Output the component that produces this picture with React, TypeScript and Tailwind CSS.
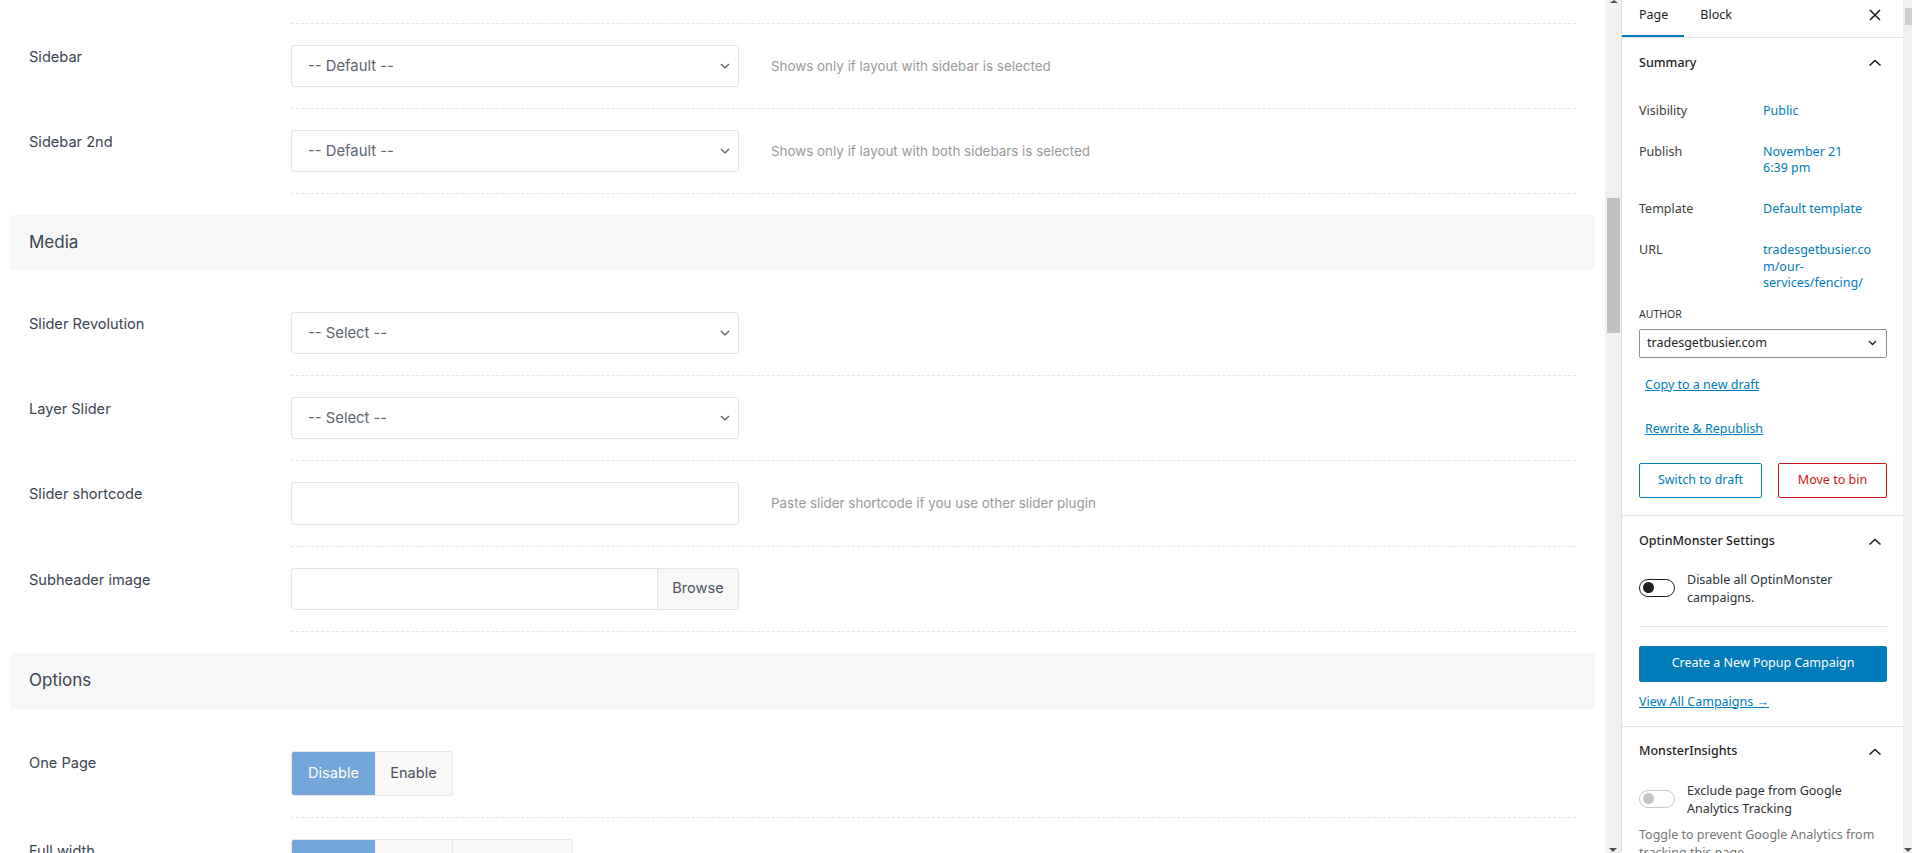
import React from "react";

function Chevron() {
  return (
    <svg width="10" height="6" viewBox="0 0 10 6" fill="none">
      <path d="M1 1 L5 5 L9 1" stroke="#555" strokeWidth="1.2" />
    </svg>
  );
}

function SelectBox({ text }: { text: string }) {
  return (
    <div className="w-[448px] h-[42px] border border-[#e1e5ea] rounded-[3px] bg-white flex items-center justify-between pl-[16px] pr-[8px] text-[14.8px] text-[#5d6570]">
      <span>{text}</span>
      <Chevron />
    </div>
  );
}

function Row({ label, children }: { label: string; children: React.ReactNode }) {
  return (
    <div className="flex px-[19px]">
      <div className="w-[262px] shrink-0 pt-[23px] text-[14.6px] leading-[20px] text-[#3b4552]">{label}</div>
      <div className="flex-1 pt-[21px] pb-[21px] border-b border-dashed border-[#e4e4e4] flex items-center">
        {children}
      </div>
    </div>
  );
}

function Help({ children }: { children: React.ReactNode }) {
  return <span className="ml-[32px] text-[13.4px] text-[#9a9a9a]">{children}</span>;
}

function SectionHead({ title, tall }: { title: string; tall?: boolean }) {
  return (
    <div
      className={
        "bg-[#f7f7f7] flex items-center px-[19px] text-[17px] text-[#3a4350] " + (tall ? "h-[56px]" : "h-[55px]")
      }
    >
      {title}
    </div>
  );
}

function ChevronUp() {
  return (
    <svg width="24" height="24" viewBox="0 0 24 24" fill="none">
      <path d="M6.5 14.5 L12 9.5 L17.5 14.5" stroke="#1e1e1e" strokeWidth="1.6" />
    </svg>
  );
}

function Toggle({ disabled }: { disabled?: boolean }) {
  return (
    <div
      className={
        "w-[36px] h-[18px] rounded-full border bg-white relative shrink-0 " +
        (disabled ? "border-[#c8c8c8]" : "border-[#1e1e1e]")
      }
    >
      <div
        className={
          "absolute top-[2.5px] left-[3px] w-[11px] h-[11px] rounded-full " +
          (disabled ? "bg-[#c4c4c4]" : "bg-[#1e1e1e]")
        }
      />
    </div>
  );
}

export default function App() {
  return (
    <div className="w-[1912px] h-[853px] overflow-hidden flex bg-white">
      {/* main content */}
      <div className="w-[1605px] shrink-0 px-[10px] font-[Inter,sans-serif]">
        <div className="flex px-[19px]">
          <div className="w-[262px] shrink-0" />
          <div className="flex-1 h-[24px] border-b border-dashed border-[#e4e4e4]" />
        </div>
        <Row label="Sidebar">
          <SelectBox text="-- Default --" />
          <Help>Shows only if layout with sidebar is selected</Help>
        </Row>
        <Row label="Sidebar 2nd">
          <SelectBox text="-- Default --" />
          <Help>Shows only if layout with both sidebars is selected</Help>
        </Row>
        <div className="mt-[21px]">
          <SectionHead title="Media" />
        </div>
        <div className="pt-[21px]">
          <Row label="Slider Revolution">
            <SelectBox text="-- Select --" />
          </Row>
          <Row label="Layer Slider">
            <SelectBox text="-- Select --" />
          </Row>
          <Row label="Slider shortcode">
            <div className="w-[448px] h-[43px] border border-[#e1e5ea] rounded-[3px] bg-white" />
            <Help>Paste slider shortcode if you use other slider plugin</Help>
          </Row>
          <Row label="Subheader image">
            <div className="w-[448px] h-[42px] border border-[#e1e5ea] rounded-[3px] bg-white flex overflow-hidden">
              <div className="flex-1" />
              <div className="w-[81px] bg-[#f7f7f7] border-l border-[#e1e5ea] flex items-center justify-center text-[14.6px] text-[#4b5360]">
                Browse
              </div>
            </div>
          </Row>
        </div>
        <div className="mt-[21px]">
          <SectionHead title="Options" tall />
        </div>
        <div className="pt-[21px]">
          <Row label="One Page">
            <div className="flex h-[45px] rounded-[3px] overflow-hidden border border-[#e6e8eb]">
              <div className="w-[83px] bg-[#72a5d8] text-white text-[14.6px] flex items-center justify-center">Disable</div>
              <div className="w-[77px] bg-[#f8f8f8] text-[#4b5360] text-[14.6px] flex items-center justify-center">Enable</div>
            </div>
          </Row>
          <Row label="Full width">
            <div className="flex h-[45px] rounded-[3px] overflow-hidden border border-[#e6e8eb]">
              <div className="w-[83px] bg-[#72a5d8]" />
              <div className="w-[78px] bg-[#f8f8f8] border-r border-[#e6e8eb]" />
              <div className="w-[119px] bg-[#f8f8f8]" />
            </div>
          </Row>
        </div>
      </div>

      {/* middle scrollbar */}
      <div className="w-[16px] shrink-0 bg-[#f1f1f1] relative">
        <div className="absolute top-0 left-[5px] w-0 h-0 border-l-[4px] border-r-[4px] border-b-[3px] border-l-transparent border-r-transparent border-b-[#505050]" />
        <div className="absolute top-[198px] left-[2px] w-[13px] h-[135px] bg-[#c1c1c1]" />
        <div className="absolute bottom-[1px] left-[4px] w-0 h-0 border-l-[4px] border-r-[4px] border-t-[4px] border-l-transparent border-r-transparent border-t-[#505050]" />
      </div>

      {/* settings sidebar */}
      <div className="w-[282px] shrink-0 border-l border-[#e0e0e0] font-['Noto_Sans',sans-serif] text-[12.5px] text-[#1e1e1e]">
        {/* tabs */}
        <div className="h-[38px] border-b border-[#e0e0e0] flex items-start">
          <div className="relative h-[37px] pl-[17px] pr-[16px] pt-[7px] leading-[16px]">
            Page
            <div className="absolute bottom-0 left-0 right-0 h-[2px] bg-[#007cba]" />
          </div>
          <div className="h-[37px] px-[16px] pt-[7px] leading-[16px]">Block</div>
          <div className="ml-auto mr-[16px] mt-[3px]">
            <svg width="24" height="24" viewBox="0 0 24 24" fill="none">
              <path d="M7 7 L17 17 M17 7 L7 17" stroke="#1e1e1e" strokeWidth="1.6" />
            </svg>
          </div>
        </div>

        {/* summary */}
        <div className="pl-[17px] pr-[16px] pb-[17px] border-b border-[#e0e0e0]">
          <div className="h-[50px] flex items-center justify-between font-medium">
            <span>Summary</span>
            <span><ChevronUp /></span>
          </div>
          <div className="leading-[16px]">
            <div className="flex mt-[15px]">
              <div className="w-[124px] text-[#3c3c3c]">Visibility</div>
              <div className="text-[#007cba]">Public</div>
            </div>
            <div className="flex mt-[25px]">
              <div className="w-[124px] text-[#3c3c3c]">Publish</div>
              <div className="text-[#007cba]">November 21<br />6:39 pm</div>
            </div>
            <div className="flex mt-[25px]">
              <div className="w-[124px] text-[#3c3c3c]">Template</div>
              <div className="text-[#007cba]">Default template</div>
            </div>
            <div className="flex mt-[25px]">
              <div className="w-[124px] text-[#3c3c3c]">URL</div>
              <div className="text-[#007cba] leading-[16.5px]">tradesgetbusier.co<br />m/our-<br />services/fencing/</div>
            </div>
          </div>
          <div className="mt-[14px] text-[10.5px] leading-[16px] uppercase text-[#2c3338]">Author</div>
          <div className="mt-[7px] h-[29px] border border-[#8c8f94] rounded-[2px] flex items-center justify-between pl-[7px] pr-[9px]">
            <span>tradesgetbusier.com</span>
            <svg width="9" height="6" viewBox="0 0 9 6" fill="none">
              <path d="M1 1 L4.5 4.5 L8 1" stroke="#1e1e1e" strokeWidth="1.3" />
            </svg>
          </div>
          <div className="mt-[19px] pl-[6px] leading-[16px] text-[#007cba] underline">Copy to a new draft</div>
          <div className="mt-[28px] pl-[6px] leading-[16px] text-[#007cba] underline">Rewrite &amp; Republish</div>
          <div className="mt-[26px] flex justify-between">
            <div className="w-[123px] h-[35px] border border-[#007cba] rounded-[2px] text-[#007cba] flex items-center justify-center">Switch to draft</div>
            <div className="w-[109px] h-[35px] border border-[#cc1818] rounded-[2px] text-[#cc1818] flex items-center justify-center">Move to bin</div>
          </div>
        </div>

        {/* optinmonster */}
        <div className="pl-[17px] pr-[16px] pt-[18px] pb-[16px] border-b border-[#e0e0e0]">
          <div className="flex items-center justify-between h-[16px] font-medium">
            <span>OptinMonster Settings</span>
            <ChevronUp />
          </div>
          <div className="flex mt-[21px] gap-[12px]">
            <div className="mt-[8px]"><Toggle /></div>
            <div className="leading-[18px] text-[#2c3338]">Disable all OptinMonster<br />campaigns.</div>
          </div>
          <div className="mt-[19px] border-t border-[#e0e0e0]" />
          <div className="mt-[19px] h-[36px] bg-[#007cba] rounded-[2px] text-white flex items-center justify-center">Create a New Popup Campaign</div>
          <div className="mt-[12px] leading-[16px] text-[#007cba] underline">View All Campaigns →</div>
        </div>

        {/* monsterinsights */}
        <div className="pl-[17px] pr-[16px] pt-[17px]">
          <div className="flex items-center justify-between h-[16px] font-medium">
            <span>MonsterInsights</span>
            <ChevronUp />
          </div>
          <div className="flex mt-[22px] gap-[12px]">
            <div className="mt-[8px]"><Toggle disabled /></div>
            <div className="leading-[18px] text-[#2c3338]">Exclude page from Google<br />Analytics Tracking</div>
          </div>
          <div className="mt-[8px] leading-[18px] text-[#757575]">Toggle to prevent Google Analytics from<br />tracking this page.</div>
        </div>
      </div>

      {/* right scrollbar */}
      <div className="w-[9px] shrink-0 bg-[#f0f0f0] relative">
        <div className="absolute top-[8px] left-[2px] w-[7px] h-[17px] bg-[#cdcdcd]" />
        <div className="absolute bottom-[1px] left-[1px] w-0 h-0 border-l-[4px] border-r-[4px] border-t-[4px] border-l-transparent border-r-transparent border-t-[#505050]" />
      </div>
    </div>
  );
}
